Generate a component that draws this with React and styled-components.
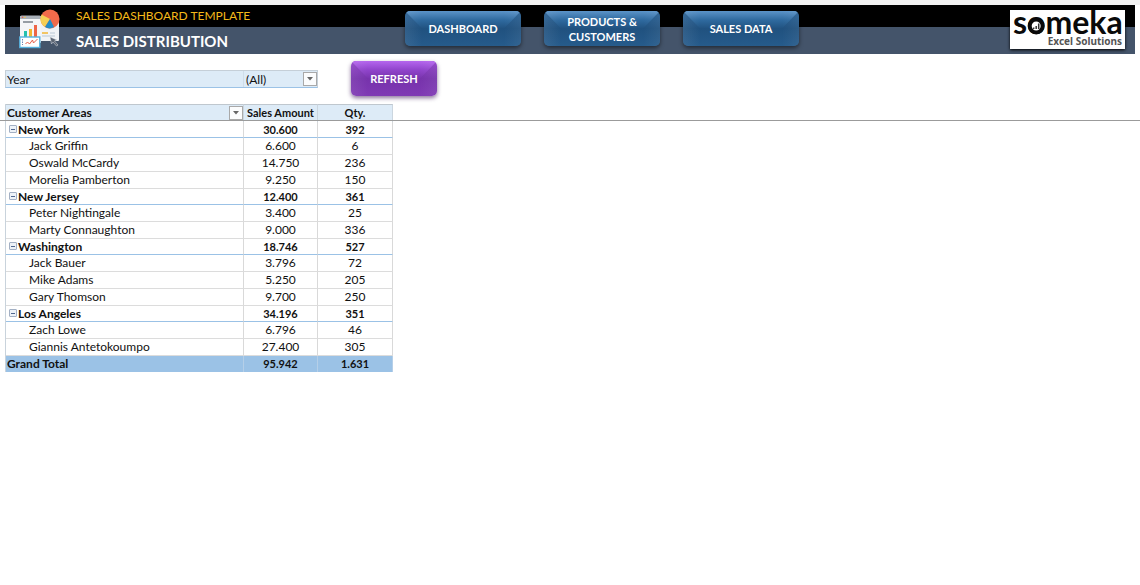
import React, { useState } from 'react'
import styled, { createGlobalStyle } from 'styled-components'

const GlobalStyle = createGlobalStyle`
  * {
    box-sizing: border-box;
  }
  body {
    margin: 0;
    background: #fff;
    color: #111;
    font-family: Lato, 'Liberation Sans', sans-serif;
    font-size: 12px;
  }
  button, select {
    font-family: inherit;
    font-size: inherit;
    color: inherit;
  }
`

const Page = styled.div`
  border-top: 5px solid #f2f2f2;
`

const Header = styled.header`
  display: flex;
  height: 49px;
  margin: 0 5px;
  background: linear-gradient(#000 22px, #44546a 22px);
`

const Brand = styled.div`
  display: flex;
  flex: 0 0 400px;
  gap: 15px;
  padding-left: 14px;
`

const ReportIcon = styled.svg`
  width: 42px;
  height: 40px;
  margin-top: 4px;
`

const AppTitle = styled.p`
  margin: 0;
  color: #f5b91a;
  font-size: 12px;
  line-height: 22px;
`

const PageTitle = styled.h1`
  margin: 0;
  color: #fff;
  font-size: 15px;
  line-height: 28px;
`

const Nav = styled.nav`
  display: flex;
  gap: 23px;
  padding-top: 6px;
`

const BevelButton = styled.button`
  position: relative;
  width: ${({ $wide }) => ($wide ? '116px' : '86px')};
  height: 35px;
  padding: 0 16px;
  border: 0;
  border-radius: 5px;
  overflow: hidden;
  background: ${({ $purple }) =>
    $purple
      ? 'linear-gradient(#8f42c8, #7733ac 50%, #7f39b4)'
      : 'linear-gradient(#2a6296, #20517f 50%, #265b8b)'};
  box-shadow: 0 2px 4px ${({ $purple }) => ($purple ? 'rgba(60, 20, 90, 0.6)' : 'rgba(0, 0, 0, 0.5)')};
  color: #fff;
  font-size: 11px;
  font-weight: 700;
  line-height: 15px;
  cursor: pointer;

  &::before,
  &::after {
    content: '';
    position: absolute;
    inset: 0;
  }
  &::before {
    clip-path: polygon(0 0, 100% 0, calc(100% - 17px) 50%, 17px 50%);
    background: ${({ $purple }) =>
      $purple
        ? 'linear-gradient(#b566ee, #9044cb 9px, #7733ac 18px)'
        : 'linear-gradient(#5b93c8, #2f6a9f 9px, #20517f 18px)'};
  }
  &::after {
    background: linear-gradient(90deg, rgba(255, 255, 255, 0.08), transparent 17px calc(100% - 17px), rgba(255, 255, 255, 0.06));
  }
`

const ButtonText = styled.span`
  position: relative;
  z-index: 1;
`

const Logo = styled.a`
  display: flex;
  flex-direction: column;
  align-self: flex-start;
  width: 115px;
  margin: 5px 10px 0 auto;
  padding: 0 3px;
  background: #fff;
  box-shadow: 0 1px 3px #000;
  color: #0a0a0a;
  text-decoration: none;
`

const LogoName = styled.span`
  font-size: 32px;
  font-weight: 700;
  line-height: 24px;
`

const LogoO = styled.span`
  position: relative;
`

const LogoBars = styled.svg`
  position: absolute;
  left: 0;
  bottom: 6px;
  width: 100%;
  height: 18px;
`

const LogoTag = styled.span`
  color: #555;
  font-family: 'Noto Sans', sans-serif;
  font-size: 10px;
  font-weight: 700;
  line-height: 15px;
  text-align: right;
`

const Toolbar = styled.div`
  display: flex;
  gap: 33px;
  padding: 7px 5px 0;
`

const Filter = styled.div`
  display: flex;
  width: 313px;
  height: 18px;
  margin-top: 9px;
  border: 1px solid #c5cfd8;
  border-bottom-color: #9bc2e6;
  background: #ddebf7;
  line-height: 17px;
`

const FilterLabel = styled.label`
  flex: 1;
  padding-left: 1px;
`

const FilterField = styled.div`
  display: flex;
  position: relative;
  width: 74px;
`

const FilterSelect = styled.select`
  width: 100%;
  padding: 0 18px 0 2px;
  border: 0;
  border-left: 1px solid #cfdde9;
  background: none;
  appearance: none;
`

const ArrowBox = styled.span`
  display: flex;
  align-items: center;
  justify-content: center;
  width: 14px;
  height: 14px;
  border: 1px solid #a9a9a9;
  background: #fbfcfd;
`

const SelectArrow = styled(ArrowBox)`
  position: absolute;
  top: 1px;
  right: 0;
  pointer-events: none;
`

const Sheet = styled.main`
  position: relative;
  padding: 8px 5px;

  /* frozen pane divider */
  &::before {
    content: '';
    position: absolute;
    top: 24px;
    left: 0;
    right: 0;
    height: 1px;
    background: #9b9b9b;
  }
`

const Pivot = styled.table`
  width: 388px;
  table-layout: fixed;
  border-spacing: 0;
  border: 1px solid #c9d3dc;
  border-width: 0 0 0 1px;
`

const Cell = styled.td`
  height: ${({ $area }) => ($area ? '16px' : '17px')};
  padding: ${({ $area }) => ($area ? '1px 0 0' : '0')};
  border-right: 1px solid #d9d9d9;
  border-bottom: 1px solid ${({ $area }) => ($area ? '#9bc2e6' : '#dcdcdc')};
  font-size: ${({ $area }) => ($area ? '11px' : '12px')};
  font-weight: ${({ $area }) => ($area ? 700 : 400)};
  line-height: 14px;
  text-align: center;
`

const NameCell = styled(Cell)`
  padding-left: ${({ $area }) => ($area ? '3px' : '23px')};
  font-size: 12px;
  text-align: left;
`

const HeadCell = styled.th`
  height: 18px;
  padding: 0 0 1px;
  border-top: 1px solid #bfc7ce;
  border-right: 1px solid #cbd6df;
  background: linear-gradient(#ddebf7 16px, #fff 16px);
  font-size: 11px;
  line-height: 16px;
  white-space: nowrap;

  &:first-child {
    font-size: 12px;
  }
`

const HeadName = styled.div`
  display: flex;
  align-items: center;
  justify-content: space-between;
  padding-left: 1px;
`

const FilterButton = styled.button`
  padding: 0;
  border: 0;
  background: none;
`

const TotalCell = styled.td`
  height: 16px;
  padding: 0;
  border-right: 1px solid #b5cfe8;
  background: #9bc2e6;
  font-size: 11px;
  font-weight: 700;
  line-height: 16px;
  text-align: center;

  &:first-child {
    padding-left: 1px;
    font-size: 12px;
    text-align: left;
  }
`

const AreaName = styled.div`
  display: flex;
  gap: 1px;
`

const Toggle = styled.button`
  display: flex;
  width: 8px;
  height: 8px;
  margin-top: 2px;
  padding: 0;
  border: 1px solid #a3b0c4;
  border-radius: 1px;
  background: #edf2f8;
  align-items: center;
  justify-content: center;

  svg {
    display: block;
  }
`

const areas = [
  {
    name: 'New York', amount: '30.600', qty: '392',
    customers: [['Jack Griffin', '6.600', '6'], ['Oswald McCardy', '14.750', '236'], ['Morelia Pamberton', '9.250', '150']],
  },
  {
    name: 'New Jersey', amount: '12.400', qty: '361',
    customers: [['Peter Nightingale', '3.400', '25'], ['Marty Connaughton', '9.000', '336']],
  },
  {
    name: 'Washington', amount: '18.746', qty: '527',
    customers: [['Jack Bauer', '3.796', '72'], ['Mike Adams', '5.250', '205'], ['Gary Thomson', '9.700', '250']],
  },
  {
    name: 'Los Angeles', amount: '34.196', qty: '351',
    customers: [['Zach Lowe', '6.796', '46'], ['Giannis Antetokoumpo', '27.400', '305']],
  },
]

function Arrow() {
  return (
    <svg width="6" height="4" viewBox="0 0 6 4" aria-hidden="true">
      <path d="M0 0h6L3 3.6z" fill="#666" />
    </svg>
  )
}

function Report() {
  return (
    <ReportIcon viewBox="0 0 42 40" aria-hidden="true">
      <rect x="20" y="10" width="20" height="22" rx="1" fill="#f1f3f6" />
      <rect x="1" y="7" width="21" height="27" rx="1" fill="#f4f5f7" />
      <path d="M1 10V8q0-1.500 1.500-1.500h18q1.500 0 1.500 1.500v2z" fill="#a9b0b9" />
      <circle cx="3.500" cy="8.300" r=".8" fill="#ee6547" />
      <circle cx="6" cy="8.300" r=".8" fill="#f4c542" />
      <path d="M4 13h10" stroke="#777f89" strokeWidth="1.500" />
      <rect x="5" y="22" width="3" height="6" fill="#24c1ae" />
      <rect x="10" y="20" width="3" height="8" fill="#f2b632" />
      <rect x="15" y="16" width="3" height="12" fill="#ee6547" />
      <circle cx="31" cy="10" r="9.500" fill="#f26b4b" />
      <path d="M31 10L22.500 5.500a9.500 9.500 0 0 0 3.500 12.500z" fill="#f6cf55" />
      <path d="M31 10l-5 8q4.500 2.800 9 0z" fill="#238dc8" />
      <path d="M23 24h6" stroke="#f2b632" strokeWidth="1.500" />
      <path d="M23 27h13M31 24h5" stroke="#b9c7d4" />
      <rect x=".8" y="28" width="20" height="10.500" fill="#fff" stroke="#56b1de" strokeWidth="1.400" />
      <path d="M3.500 30v6" stroke="#6f87b5" strokeDasharray="1.500 1" />
      <path d="M6.500 35l2-2 2 2 3-4 1 3 4-4" fill="none" stroke="#e5604c" />
      <path d="M31 28l7 3-2.500 1 3.500 4-1.500 1-3.500-4-1.500 2z" fill="#5c6573" stroke="#dfe3e8" strokeWidth=".5" />
    </ReportIcon>
  )
}

export default function App() {
  const [year, setYear] = useState('all')
  const [closed, setClosed] = useState([])

  const toggle = (name) =>
    setClosed(closed.includes(name) ? closed.filter((n) => n !== name) : [...closed, name])

  return (
    <Page>
      <GlobalStyle />
      <Header>
        <Brand>
          <Report />
          <div>
            <AppTitle>SALES DASHBOARD TEMPLATE</AppTitle>
            <PageTitle>SALES DISTRIBUTION</PageTitle>
          </div>
        </Brand>
        <Nav>
          {['DASHBOARD', 'PRODUCTS & CUSTOMERS', 'SALES DATA'].map((item) => (
            <BevelButton key={item} type="button" $wide><ButtonText>{item}</ButtonText></BevelButton>
          ))}
        </Nav>
        <Logo href="#">
          <LogoName>
            s<LogoO>o
              <LogoBars viewBox="0 0 18 18" aria-hidden="true">
                <circle cx="9" cy="9" r="6.500" fill="#fff" stroke="#0a0a0a" strokeWidth="4" />
                <path d="M6.500 12v-1.500M9 12V9M11.500 12V6.500" stroke="#333" strokeWidth="1.500" />
              </LogoBars>
            </LogoO>meka
          </LogoName>
          <LogoTag>Excel Solutions</LogoTag>
        </Logo>
      </Header>

      <Toolbar>
        <Filter>
          <FilterLabel htmlFor="year">Year</FilterLabel>
          <FilterField>
            <FilterSelect id="year" value={year} onChange={(e) => setYear(e.target.value)}>
              <option value="all">(All)</option>
            </FilterSelect>
            <SelectArrow><Arrow /></SelectArrow>
          </FilterField>
        </Filter>
        <BevelButton type="button" $purple><ButtonText>REFRESH</ButtonText></BevelButton>
      </Toolbar>

      <Sheet>
        <Pivot>
          <colgroup>
            <col />
            <col width="74" />
            <col width="75" />
          </colgroup>
          <thead>
            <tr>
              <HeadCell>
                <HeadName>
                  Customer Areas
                  <FilterButton type="button" aria-label="Filter customer areas">
                    <ArrowBox><Arrow /></ArrowBox>
                  </FilterButton>
                </HeadName>
              </HeadCell>
              <HeadCell>Sales Amount</HeadCell>
              <HeadCell>Qty.</HeadCell>
            </tr>
          </thead>
          <tbody>
            {areas.map((area) => (
              <React.Fragment key={area.name}>
                <tr>
                  <NameCell $area>
                    <AreaName>
                      <Toggle type="button" aria-label={`Toggle ${area.name}`} onClick={() => toggle(area.name)}>
                        <svg width="4" height="1" aria-hidden="true"><rect width="4" height="1" fill="#50678f" /></svg>
                      </Toggle>
                      {area.name}
                    </AreaName>
                  </NameCell>
                  <Cell $area>{area.amount}</Cell>
                  <Cell $area>{area.qty}</Cell>
                </tr>
                {!closed.includes(area.name) && area.customers.map(([name, amount, qty]) => (
                  <tr key={name}>
                    <NameCell>{name}</NameCell>
                    <Cell>{amount}</Cell>
                    <Cell>{qty}</Cell>
                  </tr>
                ))}
              </React.Fragment>
            ))}
          </tbody>
          <tfoot>
            <tr>
              <TotalCell>Grand Total</TotalCell>
              <TotalCell>95.942</TotalCell>
              <TotalCell>1.631</TotalCell>
            </tr>
          </tfoot>
        </Pivot>
      </Sheet>
    </Page>
  )
}
